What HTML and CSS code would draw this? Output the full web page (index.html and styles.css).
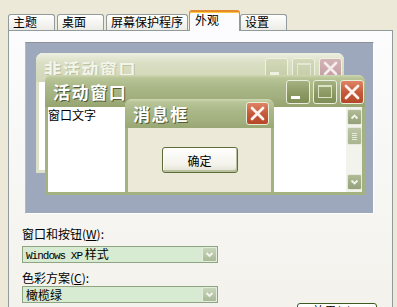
FILE: index.html
```html
<!DOCTYPE html>
<html lang="zh-CN">
<head>
<meta charset="utf-8">
<title>显示 属性</title>
<link rel="stylesheet" href="styles.css">
</head>
<body>
<div class="dialog">
  <div class="tabs">
    <div class="tab">主题</div>
    <div class="tab">桌面</div>
    <div class="tab">屏幕保护程序</div>
    <div class="tab sel">外观</div>
    <div class="tab">设置</div>
  </div>
  <div class="panel">
    <div class="preview">
      <div class="win inactive">
        <div class="title">
          <span class="ttext">非活动窗口</span>
          <div class="btns">
            <span class="cb min"><i class="minbar"></i></span>
            <span class="cb max"><i class="maxbox"></i></span>
            <span class="cb close"><svg viewBox="0 0 23 22" width="23" height="22"><path d="M6 5L17 16M17 5L6 16" stroke="#F6ECEE" stroke-width="2.6" stroke-linecap="round"/></svg></span>
          </div>
        </div>
        <div class="body"></div>
      </div>
      <div class="win active">
        <div class="title">
          <span class="ttext">活动窗口</span>
          <div class="btns">
            <span class="cb min"><i class="minbar"></i></span>
            <span class="cb max"><i class="maxbox"></i></span>
            <span class="cb close"><svg viewBox="0 0 24 24" width="24" height="24"><path d="M6 6L18 18M18 6L6 18" stroke="#FFF4F0" stroke-width="2.8" stroke-linecap="round"/></svg></span>
          </div>
        </div>
        <div class="body">
          <div class="wtext">窗口文字</div>
          <div class="scroll">
            <span class="sb"><svg viewBox="0 0 13 14" width="13" height="14"><path d="M3.5 8.5L6.5 5.5L9.5 8.5" fill="none" stroke="#F2F5EA" stroke-width="1.8"/></svg></span>
            <span class="thumb"><svg viewBox="0 0 13 16" width="13" height="16"><path d="M4 5.5H9M4 7.5H9M4 9.5H9M4 11.5H9" stroke="#E6EBD8" stroke-width="1"/></svg></span>
            <span class="track"></span>
            <span class="sb"><svg viewBox="0 0 13 14" width="13" height="14"><path d="M3.5 5.5L6.5 8.5L9.5 5.5" fill="none" stroke="#F2F5EA" stroke-width="1.8"/></svg></span>
          </div>
        </div>
      </div>
      <div class="win msg">
        <div class="title">
          <span class="ttext">消息框</span>
          <div class="btns">
            <span class="cb close"><svg viewBox="0 0 23 23" width="23" height="23"><path d="M6 6L17 17M17 6L6 17" stroke="#FFF4F0" stroke-width="2.8" stroke-linecap="round"/></svg></span>
          </div>
        </div>
        <div class="body">
          <button class="ok">确定</button>
        </div>
      </div>
    </div>
    <div class="label first">窗口和按钮(<u>W</u>):</div>
    <div class="select first">
      <span class="val"><span class="latin">Windows XP</span> 样式</span>
      <span class="drop"><svg viewBox="0 0 13 13" width="13" height="13"><path d="M3.5 5L6.5 8L9.5 5" fill="none" stroke="#F4F7EE" stroke-width="1.8"/></svg></span>
    </div>
    <div class="label second">色彩方案(<u>C</u>):</div>
    <div class="select second">
      <span class="val">橄榄绿</span>
      <span class="drop"><svg viewBox="0 0 13 13" width="13" height="13"><path d="M3.5 5L6.5 8L9.5 5" fill="none" stroke="#F4F7EE" stroke-width="1.8"/></svg></span>
    </div>
    <div class="btnrow">
      <button class="btn">效果(<u>E</u>)...</button>
    </div>
  </div>
</div>
</body>
</html>
```
FILE: styles.css
```css
* { box-sizing: border-box; }
html, body { margin: 0; padding: 0; }
body {
  width: 397px;
  height: 307px;
  overflow: hidden;
  background: #ECE9D8;
  font-family: "Noto Sans CJK SC", sans-serif;
  font-size: 12px;
  color: #000;
}
.dialog { padding: 10px 0 0 8px; }

/* tabs */
.tabs {
  display: flex;
  align-items: flex-end;
  gap: 2px;
  height: 21px;
  position: relative;
  z-index: 2;
}
.tab {
  height: 16px;
  margin-bottom: 1px;
  min-width: 47px;
  padding: 0 4px;
  border: 1px solid #919B9C;
  border-bottom: none;
  border-radius: 3px 3px 0 0;
  background: linear-gradient(#FFFFFF, #ECEBE6);
  line-height: 14px;
  white-space: nowrap;
}
.tab.sel {
  height: 21px;
  margin-bottom: 0;
  min-width: 51px;
  margin-left: -1px;
  margin-right: -2px;
  padding-top: 1px;
  padding-left: 5px;
  background: #FCFCFE;
  border-top: 2px solid #E68B2C;
  box-shadow: inset 0 1px #FFC73C;
}

/* panel */
.panel {
  margin-top: -1px;
  width: 385px;
  height: 300px;
  border: 1px solid #919B9C;
  background: linear-gradient(#FCFCFE, #F3F2EC 270px);
  padding: 11px 0 0 13px;
  position: relative;
  z-index: 1;
}
.preview {
  margin-left: 3px;
  width: 349px;
  height: 172px;
  position: relative;
  overflow: hidden;
  background: #9DA8BD;
  border: 1px solid;
  border-color: #8E9294 #FFFFFF #FFFFFF #B5B9BD;
}

/* preview windows */
.win {
  position: absolute;
  display: flex;
  flex-direction: column;
  border-radius: 7px 7px 0 0;
  overflow: hidden;
}
.title {
  display: flex;
  align-items: center;
  flex: none;
}
.ttext {
  flex: 1;
  font-size: 17px;
  font-weight: bold;
  letter-spacing: 1.6px;
  line-height: 20px;
  color: #FFFFFF;
  text-shadow: 1px 1px #4F5B36;
  white-space: nowrap;
}
.btns { display: flex; gap: 3px; }
.cb {
  display: flex;
  position: relative;
  border-radius: 3px;
  border: 1px solid #E9EDDA;
}
.minbar {
  position: absolute;
  left: 4px;
  bottom: 4px;
  width: 9px;
  height: 3px;
  background: #FFFFFF;
}
.maxbox {
  position: absolute;
  left: 4px;
  top: 4px;
  width: 14px;
  height: 13px;
  border: 1px solid #DCE3C4;
  border-top-width: 2px;
}
.cb svg { position: absolute; left: -1px; top: -1px; }

.inactive {
  left: 10px;
  top: 10px;
  width: 308px;
  height: 120px;
  background: #DDE0C8;
  box-shadow: inset 0 1px #F2F3E8;
}
.inactive .title {
  height: 29px;
  padding: 3px 2px 0 8px;
  background: linear-gradient(#EDEFE1, #DADEC3 35%, #D2D7B8);
}
.inactive .ttext {
  color: #F3F4EA;
  text-shadow: 1px 1px rgba(150, 158, 120, 0.45);
}
.inactive .btns { gap: 4px; }
.inactive .cb { width: 23px; height: 22px; border-color: #EEF0E2; }
.inactive .min, .inactive .max { background: linear-gradient(#D3D9BA, #C3CBA5); }
.inactive .minbar { background: #EEF1E2; }
.inactive .maxbox { border-color: #E3E7D3; }
.inactive .close { background: linear-gradient(#D3B4B6, #C29CA0); }
.inactive .body {
  flex: 1;
  margin: 0 3px 3px;
  background: #FFFFFF;
}

.active {
  left: 19px;
  top: 32px;
  width: 320px;
  height: 120px;
  background: #A4B181;
  box-shadow: inset 0 1px #D3DABA;
}
.active .title, .msg .title {
  background: linear-gradient(#D0D8B3 0, #B9C598 3px, #AAB788 12px, #A2AF7E 22px, #96A470 32px);
}
.active .title {
  height: 32px;
  padding: 2px 1px 0 8px;
}
.active .cb { width: 24px; height: 24px; }
.active .min, .active .max {
  background: linear-gradient(#A5B182, #8A9862 60%, #7F8D57);
}
.close {
  background: linear-gradient(#DE8465, #C65B3B 50%, #B44728);
}
.active .body {
  flex: 1;
  margin: 0 3px 3px;
  background: #FFFFFF;
  display: flex;
}
.wtext {
  flex: 1;
  padding-top: 1px;
  line-height: 14px;
  font-size: 12px;
}
.scroll {
  width: 16px;
  background: #F3F3EE;
  display: flex;
  flex-direction: column;
  align-items: center;
  padding: 2px 0;
}
.sb, .thumb {
  display: flex;
  width: 15px;
  height: 16px;
  border-radius: 2px;
  border: 1px solid #E6EADC;
  background: linear-gradient(#B0BB97, #95A17A);
}
.thumb {
  height: 18px;
  margin-top: 2px;
  background: linear-gradient(#BCC6A6, #A9B48F);
}
.track { flex: 1; }

.msg {
  left: 99px;
  top: 56px;
  width: 149px;
  height: 96px;
  background: #A4B181;
  box-shadow: inset 0 1px #D3DABA;
}
.msg .title {
  height: 29px;
  padding: 0 5px 0 8px;
}
.msg .cb { width: 23px; height: 23px; }
.msg .body {
  flex: 1;
  margin: 0 3px 3px;
  background: #ECE9D8;
  display: flex;
  justify-content: center;
  align-items: flex-start;
  padding-top: 19px;
}
.ok {
  width: 76px;
  height: 26px;
  padding: 0;
  border: 1px solid #5C6D3A;
  border-radius: 3px;
  background: linear-gradient(#FFFFFF, #F3F2EA 70%, #E2E1D2);
  box-shadow: inset -1px -2px #B9C19F, inset 1px 1px #FFFFFF;
  font-family: "Noto Sans CJK SC", sans-serif;
  font-size: 12px;
  color: #000;
}

/* form fields */
.label {
  height: 14px;
  line-height: 14px;
  white-space: nowrap;
}
.label.first { margin-top: 13px; }
.label.second { margin-top: 8px; }
.select {
  width: 196px;
  height: 17px;
  border: 1px solid #8FA582;
  background: #D6EBD2;
  display: flex;
  align-items: center;
  padding: 0 0 0 3px;
}
.select.first { margin-top: 5px; }
.select.second { margin-top: 1px; }
.val {
  flex: 1;
  line-height: 14px;
  white-space: nowrap;
}
.latin {
  font-family: "Liberation Mono", monospace;
  font-size: 11px;
  letter-spacing: -1px;
}
.drop {
  display: flex;
  width: 15px;
  height: 15px;
  border: 1px solid #E5ECDD;
  border-radius: 2px;
  background: linear-gradient(#C8D6BB, #A9BA9A);
}
.btnrow {
  display: flex;
  justify-content: flex-end;
  padding-right: 15px;
}
.btn {
  width: 80px;
  height: 23px;
  padding: 0;
  border: 1px solid #3E5A22;
  border-radius: 3px;
  background: linear-gradient(#FFFFFF, #ECEBE1);
  font-family: "Noto Sans CJK SC", sans-serif;
  font-size: 12px;
  line-height: 14px;
  color: #000;
  display: flex;
  justify-content: center;
  align-items: flex-start;
}
```
